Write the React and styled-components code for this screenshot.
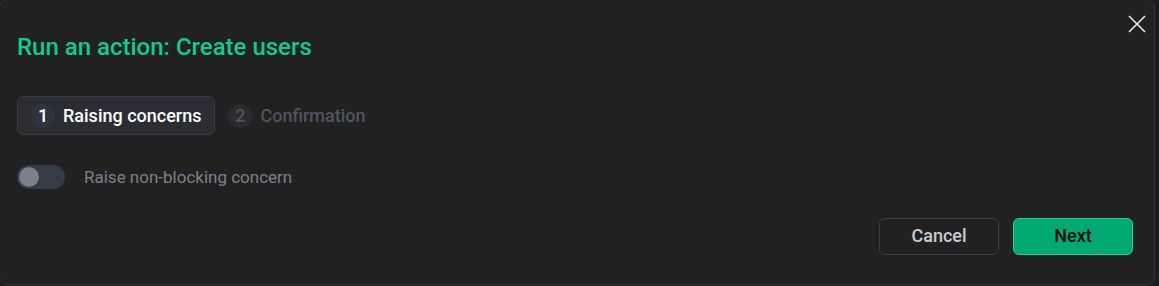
import React, { useState } from 'react';
import styled, { createGlobalStyle } from 'styled-components';

/* style */
const GlobalStyle = createGlobalStyle`
  html, body {
    margin: 0;
    padding: 0;
    background: #1b1c1f;
    overflow: hidden;
  }
  body {
    font-family: Roboto, "Liberation Sans", sans-serif;
  }
`;

const Dialog = styled.div`
  position: relative;
  box-sizing: border-box;
  width: 1156px;
  height: 286px;
  margin: -1px 0 0 -1px;
  padding: 32px 21px 0 17px;
  background: #212121;
  border: 1px solid #2e323a;
  border-radius: 8px;
  display: flex;
  flex-direction: column;
`;

const CloseButton = styled.button`
  position: absolute;
  top: 13px;
  right: 6px;
  width: 22px;
  height: 22px;
  padding: 0;
  border: none;
  background: transparent;
  cursor: pointer;
  svg {
    display: block;
  }
`;

const Title = styled.h2`
  margin: 0;
  font-size: 24px;
  line-height: 30px;
  font-weight: 500;
  color: #14c98c;
`;

const Steps = styled.div`
  display: flex;
  align-items: center;
  gap: 13px;
  margin-top: 34px;
`;

const Step = styled.div`
  box-sizing: border-box;
  display: flex;
  align-items: center;
  gap: 8px;
  height: 39px;
  padding: ${(p) => (p.active ? '0 13px 0 13px' : '0')};
  border-radius: 6px;
  border: ${(p) => (p.active ? '1px solid #393d46' : 'none')};
  background: ${(p) => (p.active ? '#2b2d33' : 'transparent')};
  font-size: 18px;
  font-weight: 500;
  color: ${(p) => (p.active ? '#ffffff' : '#4f5560')};
`;

const StepNumber = styled.span`
  display: flex;
  align-items: center;
  justify-content: center;
  width: 24px;
  height: 24px;
  border-radius: 50%;
  background: ${(p) => (p.active ? '#30333a' : '#2a2b2e')};
  color: ${(p) => (p.active ? '#ffffff' : '#4f5560')};
  font-size: 18px;
  font-weight: 500;
`;

const ToggleRow = styled.label`
  display: flex;
  align-items: center;
  gap: 19px;
  margin-top: 30px;
  cursor: pointer;
`;

const Track = styled.span`
  position: relative;
  display: block;
  width: 48px;
  height: 24px;
  border-radius: 12px;
  background: ${(p) => (p.on ? '#03a872' : '#363c45')};
  transition: background 0.2s;
`;

const Knob = styled.span`
  position: absolute;
  top: 2px;
  left: ${(p) => (p.on ? '26px' : '2px')};
  width: 20px;
  height: 20px;
  border-radius: 50%;
  background: #7b818b;
  transition: left 0.2s;
`;

const ToggleLabel = styled.span`
  font-size: 17px;
  color: #7a828e;
`;

const Footer = styled.div`
  display: flex;
  justify-content: flex-end;
  gap: 14px;
  margin-top: 29px;
`;

const Button = styled.button`
  box-sizing: border-box;
  width: 120px;
  height: 37px;
  padding: 0 0 2px;
  border-radius: 6px;
  font-family: Roboto, "Liberation Sans", sans-serif;
  font-size: 18px;
  font-weight: 500;
  cursor: pointer;
  border: 1px solid ${(p) => (p.primary ? '#1ed493' : '#3a3f48')};
  background: ${(p) => (p.primary ? '#03a872' : 'transparent')};
  color: ${(p) => (p.primary ? '#0b0f0e' : '#c8ccd2')};
`;

function App() {
  const [concern, setConcern] = useState(false);
  return (
    <>
      <GlobalStyle />
      <Dialog>
        <CloseButton aria-label="Close">
          <svg width="22" height="22" viewBox="0 0 22 22">
            <path d="M3 3 L19 19 M19 3 L3 19" stroke="#f2f2f2" strokeWidth="1.5" />
          </svg>
        </CloseButton>
        <Title>Run an action: Create users</Title>
        <Steps>
          <Step active>
            <StepNumber active>1</StepNumber>
            Raising concerns
          </Step>
          <Step>
            <StepNumber>2</StepNumber>
            Confirmation
          </Step>
        </Steps>
        <ToggleRow onClick={() => setConcern(!concern)}>
          <Track on={concern ? 1 : 0}>
            <Knob on={concern ? 1 : 0} />
          </Track>
          <ToggleLabel>Raise non-blocking concern</ToggleLabel>
        </ToggleRow>
        <Footer>
          <Button>Cancel</Button>
          <Button primary>Next</Button>
        </Footer>
      </Dialog>
    </>
  );
}

export default App;
